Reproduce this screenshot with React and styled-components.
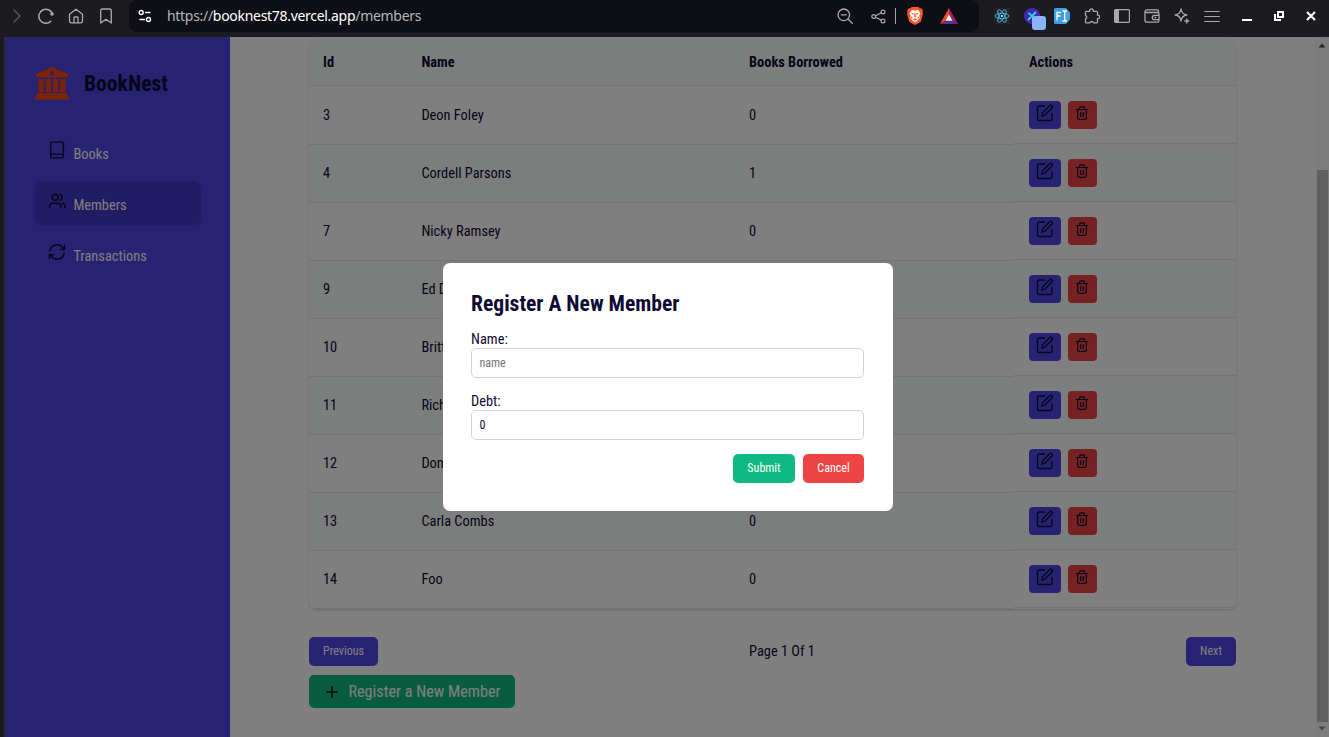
import React from "react";
import styled, { createGlobalStyle } from "styled-components";

const GlobalStyle = createGlobalStyle`
  *, *::before, *::after { box-sizing: border-box; }
  html, body { margin: 0; height: 100%; overflow: hidden; }
  body {
    font-family: "Roboto Condensed", Roboto, "Liberation Sans", sans-serif;
    font-stretch: 75%;
    font-size: 14.4px;
    line-height: 21px;
    color: #0f0a33;
    background: #1c1b20;
  }
  button, input { font: inherit; font-stretch: inherit; }
`;

const Window = styled.div`
  display: flex;
  flex-direction: column;
  width: 1329px;
  height: 737px;
  overflow: hidden;
`;

/* ---------- browser toolbar ---------- */

const Toolbar = styled.header`
  display: flex;
  align-items: flex-start;
  height: 37px;
  flex: none;
  background: #1c1b20;
`;

const ToolSlot = styled.span`
  position: relative;
  display: flex;
  align-items: center;
  justify-content: center;
  width: ${(p) => p.$w || 30}px;
  height: 32px;
  flex: none;
  color: ${(p) => p.$color || "#a9a8ae"};
  svg { display: block; }
`;

const WindowControls = styled.div`
  display: flex;
  margin-left: 4px;
`;

const AddressBar = styled.div`
  display: flex;
  align-items: center;
  width: 850px;
  height: 32px;
  margin: 0 8px;
  border-radius: 8px;
  background: #0e0f14;
`;

const Url = styled.span`
  flex: 1;
  padding-left: 6px;
  font-family: "Noto Sans", "Open Sans", sans-serif;
  font-stretch: normal;
  font-size: 14px;
  line-height: 20px;
  letter-spacing: -0.3px;
  color: #b5b6ba;
  white-space: nowrap;
  b { font-weight: 400; color: #fff; }
`;

const Divider = styled.span`
  width: 1px;
  height: 16px;
  background: #a0a0a6;
`;

const Badge = styled.span`
  position: absolute;
  left: 15px;
  top: 16px;
  width: 14px;
  height: 14px;
  border-radius: 3px;
  background: #8ab4f8;
`;

/* ---------- page ---------- */

const Viewport = styled.div`
  position: relative;
  display: flex;
  flex: 1;
  margin-left: 4px;
  background: #fff;
`;

const Sidebar = styled.aside`
  width: 226px;
  flex: none;
  padding: 28px 29px 0;
  background: #4f46e5;
  border-left: 1px solid #55555f;
`;

const Brand = styled.div`
  display: flex;
  align-items: center;
  gap: 15px;
  height: 37px;
  padding-left: 1px;
  font-size: 21.6px;
  font-weight: 700;
  svg { margin-bottom: 1px; }
`;

const Nav = styled.nav`
  display: flex;
  flex-direction: column;
  gap: 7px;
  margin-top: 28px;
`;

const NavItem = styled.a`
  display: flex;
  gap: 7.4px;
  height: 44px;
  padding: 11px 14px;
  border-radius: 7px;
  line-height: 27px;
  color: #fff;
  background: ${(p) => (p.$active ? "#4338ca" : "transparent")};
  svg { color: #0f0a33; flex: none; }
`;

const Main = styled.main`
  flex: 1;
  padding: 2px 79px 0 79px;
`;

const Table = styled.div`
  border-radius: 7px;
  overflow: hidden;
  box-shadow: 0 1px 3px rgba(0, 0, 0, 0.12), 0 1px 2px rgba(0, 0, 0, 0.08);
  height: 570px;
`;

const Row = styled.div`
  display: grid;
  grid-template-columns: 98.4px 327.6px 279px 1fr;
  height: ${(p) => (p.$head ? 47 : 58)}px;
  font-weight: ${(p) => (p.$head ? 700 : 400)};
  background: ${(p) => (p.$tinted ? "#f8fdfb" : "#fff")};
  &:nth-child(2) { height: 59px; }
`;

const Cell = styled.div`
  display: flex;
  align-items: center;
  padding: 0 14px;
  border-bottom: 1px solid #e5e7eb;
`;

const ActionCell = styled(Cell)`
  gap: 7px;
  padding-left: 15px;
  margin-bottom: ${(p) => (p.$head ? 0 : 1)}px;
`;

const buttonTone = {
  primary: "#4f46e5",
  danger: "#ef4444",
  success: "#10b981",
};

const Button = styled.button`
  display: inline-flex;
  align-items: center;
  justify-content: center;
  height: 29px;
  padding: 0;
  border: 0;
  border-radius: 5px;
  font-size: 12px;
  line-height: 17px;
  color: #fff;
  width: ${(p) => p.$w}px;
  background: ${(p) => buttonTone[p.$tone]};
`;

const IconButton = styled(Button)`
  height: 28px;
  padding-bottom: 4px;
  border-radius: 4px;
  color: #0f0a33;
`;

const Pager = styled.div`
  display: grid;
  grid-template-columns: 440px 1fr auto;
  align-items: center;
  justify-items: start;
  margin-top: 28px;
`;

const RegisterButton = styled(Button)`
  height: 33px;
  margin-top: 9px;
  gap: 7px;
  font-size: 16.2px;
  svg { color: #0f0a33; }
`;

const Scrollbar = styled.div`
  display: flex;
  flex-direction: column;
  justify-content: space-between;
  align-items: center;
  width: 14px;
  flex: none;
  background: #f8f8f8;
  padding: 6px 0;
`;

const Thumb = styled.div`
  width: 11px;
  height: 552px;
  margin-top: 117px;
  background: #c1c1c1;
`;

/* ---------- dialog ---------- */

const Overlay = styled.div`
  position: absolute;
  inset: 0;
  background: rgba(0, 0, 0, 0.5);
  display: flex;
  align-items: center;
  justify-content: center;
`;

const Dialog = styled.form`
  width: 450px;
  height: 248px;
  margin-left: 3px;
  padding: 27px 29px 28px 28px;
  border-radius: 7px;
  background: #fff;
`;

const Title = styled.h2`
  margin: 0 0 10px;
  font-size: 21.6px;
  line-height: 28px;
  font-weight: 700;
`;

const Field = styled.label`
  display: block;
  margin-bottom: 12px;
  line-height: 20px;
`;

const FieldName = styled.span`
  display: block;
  height: 20px;
  line-height: 23px;
`;

const Input = styled.input`
  display: block;
  width: 100%;
  height: 30px;
  padding: 0 7.4px;
  border: 1px solid #d1d5db;
  border-radius: 5px;
  font-size: 12px;
  color: #0f0a33;
  background: #fff;
  &::placeholder { color: #757575; opacity: 1; }
`;

const FormActions = styled.div`
  display: flex;
  justify-content: flex-end;
  gap: 8px;
  margin-top: 14px;
`;

/* ---------- icons ---------- */

const Stroke = ({ size = 18, w = 2, children, box = 24, ...rest }) => (
  <svg width={size} height={size} viewBox={`0 0 ${box} ${box}`} fill="none" stroke="currentColor"
    strokeWidth={w} strokeLinecap="round" strokeLinejoin="round" {...rest}>{children}</svg>
);

const ChevronIcon = () => <Stroke size={16} box={16} w={1.3} strokeLinecap="butt"><path d="M5.5 1.5 12 8l-6.500 6.500" /></Stroke>;
const ReloadIcon = () => (
  <Stroke size={16} box={16} w={1.5}><path d="M12.800 13.200A7 7 0 1 1 14.500 6" /><circle cx="14" cy="6" r="1.800" fill="currentColor" stroke="none" /></Stroke>
);
const HomeIcon = () => (
  <Stroke size={16} box={16} w={1.3}><path d="M1.500 6.200 8 1.200l6.500 5v6.800a1.800 1.800 0 0 1-1.800 1.800H3.300A1.800 1.800 0 0 1 1.500 13z" /><path d="M6 14.500v-4.700A.8.8 0 0 1 6.800 9h2.400a.8.8 0 0 1 .8.8v4.700" /></Stroke>
);
const BookmarkIcon = () => <Stroke size={16} box={16} w={1.3}><path d="M2.700 2.500A1.500 1.500 0 0 1 4.200 1h7.600a1.500 1.500 0 0 1 1.500 1.500V15L8 11.300 2.700 15z" /></Stroke>;
const TuneIcon = () => (
  <Stroke size={14} box={14} w={1.4}><circle cx="3.200" cy="3.500" r="2" /><path d="M7.500 3.500h4.500M2 10.500h4.500" /><circle cx="10.500" cy="10.500" r="2" /></Stroke>
);
const ZoomOutIcon = () => <Stroke size={16} box={16} w={1.3}><circle cx="6.800" cy="6.800" r="5.800" /><path d="m11 11 4.300 4.300M4.300 6.800h5" /></Stroke>;
const ShareIcon = () => (
  <Stroke size={15} box={15} w={1.2}><circle cx="2.700" cy="7.500" r="1.900" /><circle cx="12" cy="3" r="1.900" /><circle cx="12" cy="12" r="1.900" /><path d="m4.500 6.700 5.700-2.800M4.500 8.300l5.700 2.800" /></Stroke>
);
const BraveIcon = () => (
  <svg width="16" height="18" viewBox="0 0 16 18">
    <path fill="#fb542b" d="M4.500 0h7l1.300 1.500 1.500-.2L16 3.500l-.5 1.500.5 1.500-2 7.500c-.3 1-3.200 3-6 4-2.800-1-5.700-3-6-4L0 6.500.5 5 0 3.500l1.700-2.200 1.500.2z" />
    <path fill="#fff" d="M5 3l3 .6L11 3l2.500 3.200-1.500 2.800 1 1.500-2.200 2.700L8 15.200l-2.800-2L3 10.500 4 9 2.500 6.200z" />
    <path fill="#fb542b" d="M4 5.800l3 .7-.8 1.500zM12 5.800l-3 .7.8 1.500zM7.400 6.500h1.200l.4 3.200-1 .8-1-.8zM5.800 12.400L8 11.200l2.200 1.200L8 13.600zM3.800 9.300l2.200 1.500-1.500 1zM12.200 9.300L10 10.800l1.500 1z" />
  </svg>
);
const RewardsIcon = () => (
  <svg width="18" height="16" viewBox="0 0 18 16">
    <path fill="#ff4724" d="M9 0 0 16l5.500-3.300L9 6.300z" />
    <path fill="#9e1f63" d="M9 0l9 16-5.500-3.300L9 6.300z" />
    <path fill="#662d91" d="M0 16h18l-5.500-3.300h-7z" />
    <path fill="#fff" d="M9 6.300l3.500 6.400h-7z" />
  </svg>
);
const ReactIcon = () => (
  <svg width="16" height="16" viewBox="0 0 16 16" fill="none" stroke="#61dafb" strokeWidth="0.7">
    <rect width="16" height="16" fill="#20232a" stroke="none" />
    <ellipse cx="8" cy="8" rx="7" ry="2.700" /><ellipse cx="8" cy="8" rx="7" ry="2.700" transform="rotate(60 8 8)" />
    <ellipse cx="8" cy="8" rx="7" ry="2.700" transform="rotate(120 8 8)" /><circle cx="8" cy="8" r="1.300" fill="#61dafb" stroke="none" />
  </svg>
);
const ExtensionIcon = () => (
  <svg width="16" height="16" viewBox="0 0 16 16"><circle cx="8" cy="8" r="8" fill="#4524b8" />
    <path d="M4 5.500c2.500-.5 3 1.500 4 3s2 2.500 3.500 2M12 4 8.500 7.500M7 9l-3 3" fill="none" stroke="#21e6c8" strokeWidth="1.800" /></svg>
);
const FontToolIcon = () => (
  <svg width="16" height="16" viewBox="0 0 16 16"><path d="M1.500 0H12l4 4.500v7L12 16H1.500A1.500 1.500 0 0 1 0 14.500v-13A1.500 1.500 0 0 1 1.500 0z" fill="#3f9fe0" />
    <path d="M3 12.500v-8h4M3 8h3.500M8.500 3h1.500l.7.600.7-.6H13M8.500 13H10l.7-.6.7.6H13M10.700 3.600v8.800" fill="none" stroke="#fff" strokeWidth="1.300" /></svg>
);
const PuzzleIcon = () => (
  <Stroke size={16} box={16} w={1.3}><path d="M2.500 3.300h3.200a1.900 1.900 0 1 1 3.600 0h3.200a1 1 0 0 1 1 1v2.900a1.800 1.800 0 1 1 0 3.500v3.200a1 1 0 0 1-1 1H9.600a2 2 0 0 0-3.800 0H2.500a1 1 0 0 1-1-1v-3a1.900 1.900 0 0 0 0-3.600v-3a1 1 0 0 1 1-1z" /></Stroke>
);
const PanelIcon = () => (
  <svg width="16" height="14" viewBox="0 0 16 14"><rect x=".6" y=".6" width="14.800" height="12.800" rx="1" fill="none" stroke="currentColor" strokeWidth="1.200" /><path d="M1 1h4v12H1z" fill="currentColor" /></svg>
);
const WalletIcon = () => (
  <Stroke size={16} box={16} w={1.3}><path d="M14.500 5V3.300a1.500 1.500 0 0 0-1.500-1.500H3A2 2 0 0 0 1 3.500v9a1.700 1.700 0 0 0 1.700 1.700h10.600a1.700 1.700 0 0 0 1.700-1.700V6a1.500 1.500 0 0 0-1.500-1.500H2.500A1.500 1.500 0 0 1 1 3.200M15 7.300h-4.500a2.200 2.200 0 0 0 0 4.400H15M11 9.500h.8" /></Stroke>
);
const SparkleIcon = () => (
  <Stroke size={16} box={16} w={1.3}><path d="M7 1c.5 3.800 2 5.300 5.800 6C9 7.600 7.500 9.200 7 13 6.500 9.200 5 7.600 1.200 7 5 6.300 6.500 4.800 7 1z" /><path d="M12.800 11v4M10.800 13h4" /></Stroke>
);
const MenuIcon = () => <Stroke size={16} box={16} w={1.2}><path d="M.7 3.500h14.600M.7 8.500h14.600M.7 13.500h14.600" /></Stroke>;
const MinimizeIcon = () => <svg width="10" height="12" viewBox="0 0 10 12"><path d="M0 9h10v2H0z" fill="#fff" /></svg>;
const RestoreIcon = () => (
  <svg width="10" height="10" viewBox="0 0 10 10" fill="none" stroke="#fff" strokeWidth="2"><path d="M4 1h5v5H4z" /><path d="M1 3v6h6" /></svg>
);
const CloseIcon = () => <svg width="10" height="10" viewBox="0 0 10 10"><path d="m1 1 8 8M9 1 1 9" stroke="#fff" strokeWidth="2.200" /></svg>;

const BankIcon = () => (
  <svg width="34" height="33" viewBox="0 0 34 33" fill="#ff4500">
    <path fillRule="evenodd" d="M17 0 33 7v3.500H1V7zM17 4a2.200 2.200 0 1 0 0 4.400A2.200 2.200 0 0 0 17 4z" />
    <path d="M3.500 12h5.200v13H3.500zM10.700 12h5.200v13h-5.200zM18 12h5.200v13H18zM25.200 12h5.200v13h-5.200zM1.800 26h30.400v3.200H1.800zM.3 29h33.400v3.500H.3z" />
  </svg>
);
const BookIcon = () => <Stroke size={18} w={1.9}><path d="M5.500 1.500h13a2 2 0 0 1 2 2v17a2 2 0 0 1-2 2h-13a2 2 0 0 1-2-2v-17a2 2 0 0 1 2-2zM3.500 19.500a2 2 0 0 1 2-2h15" /></Stroke>;
const UsersIcon = () => <Stroke size={18}><path d="M17 21v-2a4 4 0 0 0-4-4H6a4 4 0 0 0-4 4v2M22.500 21v-2a4 4 0 0 0-3-3.870M16 3.130a4 4 0 0 1 0 7.750" /><circle cx="9.500" cy="7" r="4" /></Stroke>;
const RefreshIcon = () => <Stroke size={18}><path d="M2.500 10.500a9.600 9.600 0 0 1 17.300-4L22 8.500M22 3v5.500h-5.500M21.500 13.500a9.600 9.600 0 0 1-17.300 4L2 15.500M7.500 15.500H2V21" /></Stroke>;
const EditIcon = () => (
  <Stroke size={18} box={18} w={1.4}><path d="M8.500 2H3.200A1.700 1.700 0 0 0 1.500 3.700v11.100a1.700 1.700 0 0 0 1.700 1.700h11.100a1.700 1.700 0 0 0 1.700-1.700V9.500" /><path d="M13.700 1.800a1.600 1.600 0 0 1 2.300 2.300l-7.200 7.200-3 .9.800-3.100z" /></Stroke>
);
const TrashIcon = () => (
  <Stroke size={14} box={14} w={1.2}><path d="M1.300 3.500h11.400M2.700 3.500v8.200a1.600 1.600 0 0 0 1.600 1.600h5.400a1.600 1.600 0 0 0 1.600-1.600V3.500M4.500 3.300V2.200A1.300 1.300 0 0 1 5.800.9h2.400a1.300 1.300 0 0 1 1.300 1.300v1.100M5.700 6.500v4M8.300 6.500v4" /></Stroke>
);
const PlusIcon = () => <svg width="18" height="18" viewBox="0 0 18 18"><path d="M9 3v12M3 9h12" stroke="currentColor" strokeWidth="1.700" /></svg>;
const Arrow = ({ down }) => <svg width="8" height="5" viewBox="0 0 8 5"><path d={down ? "M.5.5h7L4 4.500z" : "M.5 4.500h7L4 .5z"} fill={down ? "#8a8a8a" : "#505050"} /></svg>;

/* ---------- data ---------- */

const members = [
  [3, "Deon Foley", 0],
  [4, "Cordell Parsons", 1],
  [7, "Nicky Ramsey", 0],
  [9, "Ed Dalton", 0],
  [10, "Brittany Cole", 0],
  [11, "Richard Moss", 0],
  [12, "Dominic Hale", 0],
  [13, "Carla Combs", 0],
  [14, "Foo", 0],
];

const navItems = [
  ["Books", BookIcon],
  ["Members", UsersIcon],
  ["Transactions", RefreshIcon],
];

const BrowserToolbar = () => (
  <Toolbar>
    <ToolSlot $w={31} $color="#5b5a60"><ChevronIcon /></ToolSlot>
    <ToolSlot><ReloadIcon /></ToolSlot>
    <ToolSlot><HomeIcon /></ToolSlot>
    <ToolSlot><BookmarkIcon /></ToolSlot>
    <AddressBar>
      <ToolSlot $w={32} $color="#fff"><TuneIcon /></ToolSlot>
      <Url>https://<b>booknest78.vercel.app</b>/members</Url>
      <ToolSlot $w={34}><ZoomOutIcon /></ToolSlot>
      <ToolSlot $w={33}><ShareIcon /></ToolSlot>
      <Divider />
      <ToolSlot $w={38}><BraveIcon /></ToolSlot>
      <ToolSlot $w={30}><RewardsIcon /></ToolSlot>
      <ToolSlot $w={15} />
    </AddressBar>
    <ToolSlot><ReactIcon /></ToolSlot>
    <ToolSlot><ExtensionIcon /><Badge /></ToolSlot>
    <ToolSlot><FontToolIcon /></ToolSlot>
    <ToolSlot><PuzzleIcon /></ToolSlot>
    <ToolSlot><PanelIcon /></ToolSlot>
    <ToolSlot><WalletIcon /></ToolSlot>
    <ToolSlot><SparkleIcon /></ToolSlot>
    <ToolSlot><MenuIcon /></ToolSlot>
    <WindowControls>
      <ToolSlot $w={32}><MinimizeIcon /></ToolSlot>
      <ToolSlot $w={32}><RestoreIcon /></ToolSlot>
      <ToolSlot $w={32}><CloseIcon /></ToolSlot>
    </WindowControls>
  </Toolbar>
);

const MembersTable = () => (
  <Table>
    <Row $head $tinted>
      <Cell>Id</Cell>
      <Cell>Name</Cell>
      <Cell>Books Borrowed</Cell>
      <ActionCell $head>Actions</ActionCell>
    </Row>
    {members.map(([id, name, borrowed], i) => (
      <Row key={id} $tinted={i % 2 === 1}>
        <Cell>{id}</Cell>
        <Cell>{name}</Cell>
        <Cell>{borrowed}</Cell>
        <ActionCell>
          <IconButton $tone="primary" $w={32}><EditIcon /></IconButton>
          <IconButton $tone="danger" $w={29}><TrashIcon /></IconButton>
        </ActionCell>
      </Row>
    ))}
  </Table>
);

export default function App() {
  return (
    <Window>
      <GlobalStyle />
      <BrowserToolbar />
      <Viewport>
        <Sidebar>
          <Brand><BankIcon />BookNest</Brand>
          <Nav>
            {navItems.map(([label, Icon]) => (
              <NavItem key={label} $active={label === "Members"}><Icon />{label}</NavItem>
            ))}
          </Nav>
        </Sidebar>
        <Main>
          <MembersTable />
          <Pager>
            <Button $tone="primary" $w={69}>Previous</Button>
            <span>Page 1 Of 1</span>
            <Button $tone="primary" $w={50}>Next</Button>
          </Pager>
          <RegisterButton $tone="success" $w={206}><PlusIcon />Register a New Member</RegisterButton>
        </Main>
        <Scrollbar><Arrow /><Thumb /><Arrow down /></Scrollbar>
        <Overlay>
          <Dialog onSubmit={(e) => e.preventDefault()}>
            <Title>Register A New Member</Title>
            <Field><FieldName>Name:</FieldName><Input placeholder="name" /></Field>
            <Field><FieldName>Debt:</FieldName><Input defaultValue="0" /></Field>
            <FormActions>
              <Button type="submit" $tone="success" $w={62}>Submit</Button>
              <Button type="button" $tone="danger" $w={61}>Cancel</Button>
            </FormActions>
          </Dialog>
        </Overlay>
      </Viewport>
    </Window>
  );
}
